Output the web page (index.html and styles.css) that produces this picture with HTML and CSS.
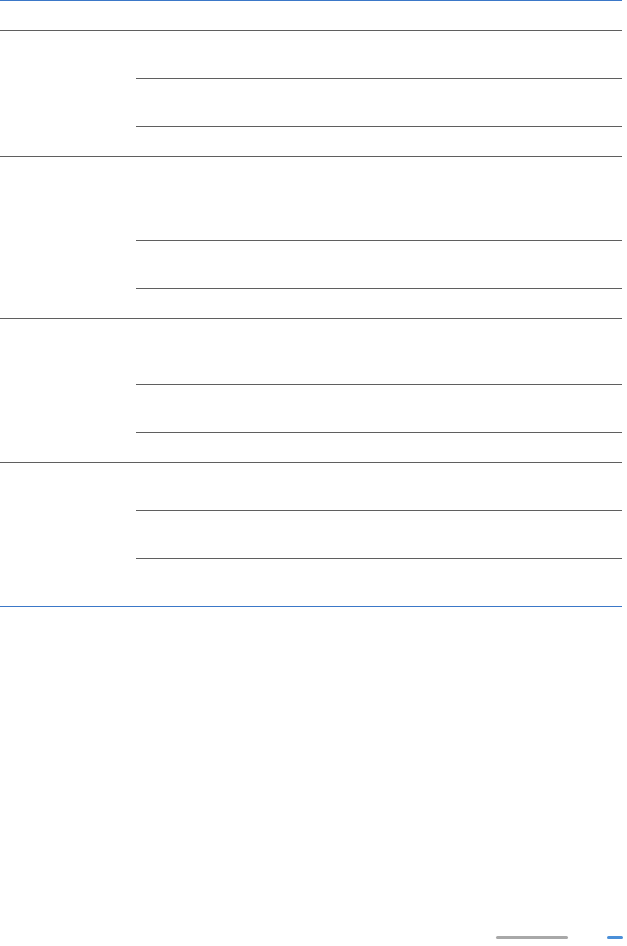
FILE: index.html
```html
<!DOCTYPE html>
<html>

<head>
  <link rel="stylesheet" href="styles.css">
</head>

<body>
  <div class="page">
    <div class="sheet">
      <div class="head"></div>

      <div class="group">
        <div class="label"></div>
        <div class="rows">
          <div class="row"></div>
          <div class="row"></div>
          <div class="row short"></div>
        </div>
      </div>

      <div class="group">
        <div class="label"></div>
        <div class="rows">
          <div class="row tall"></div>
          <div class="row"></div>
          <div class="row short"></div>
        </div>
      </div>

      <div class="group">
        <div class="label"></div>
        <div class="rows">
          <div class="row mid"></div>
          <div class="row"></div>
          <div class="row short"></div>
        </div>
      </div>

      <div class="group">
        <div class="label"></div>
        <div class="rows">
          <div class="row"></div>
          <div class="row"></div>
          <div class="row"></div>
        </div>
      </div>
    </div>

    <div class="pager">
      <span class="track"></span>
      <span class="dot"></span>
    </div>
  </div>
</body>

</html>
```

FILE: styles.css
```css
* {
  margin: 0;
  padding: 0;
  box-sizing: border-box;
}

body {
  background-color: #ffffff;
  font-family: "Liberation Sans", Arial, sans-serif;
}

.page {
  display: flex;
  flex-direction: column;
  min-height: 946px;
}

.sheet {
  margin-right: 5px;
  border-top: 1px solid #3b78c8;
  border-bottom: 1px solid #3b78c8;
}

.head {
  height: 29px;
}

.group {
  display: flex;
  border-top: 1px solid #5f5f5f;
}

.label {
  width: 136px;
  flex-shrink: 0;
}

.rows {
  flex: 1;
}

.row {
  height: 47px;
}

.row + .row {
  border-top: 1px solid #5f5f5f;
  height: 48px;
}

.row.tall {
  height: 83px;
}

.row.mid {
  height: 65px;
}

.row.short {
  height: 30px;
}

.pager {
  margin-top: auto;
  display: flex;
  justify-content: flex-end;
  align-items: center;
  gap: 39px;
  padding: 0 4px 7px 0;
}

.track {
  width: 72px;
  height: 3px;
  border-radius: 2px;
  background-color: #a8a8a8;
}

.dot {
  width: 16px;
  height: 3px;
  border-radius: 2px;
  background-color: #4a8fd8;
}
```
